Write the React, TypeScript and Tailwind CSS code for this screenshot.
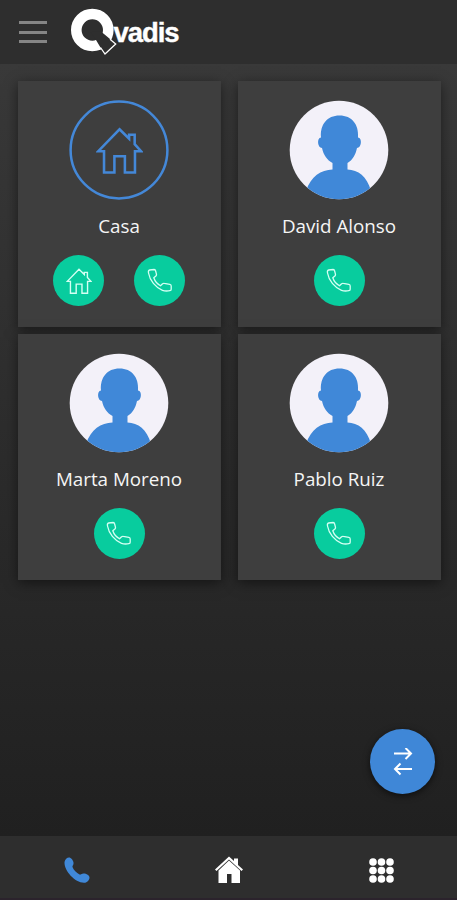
import React from 'react';

interface Contact {
  name: string;
  home?: boolean;
}

const contacts: Contact[] = [
  { name: 'Casa', home: true },
  { name: 'David Alonso' },
  { name: 'Marta Moreno' },
  { name: 'Pablo Ruiz' },
];

interface IconProps {
  className?: string;
  strokeWidth?: number;
}

function HouseOutline({ className, strokeWidth = 2 }: IconProps) {
  return (
    <svg viewBox="0 0 48 48" className={className} fill="none" stroke="currentColor" strokeWidth={strokeWidth}>
      <path d="M24 2.3 L33.8 12 V8 H39.5 V17.6 L46 24.7 H39.8 V46.5 H29.5 V29.8 H18.8 V46.5 H8.2 V24.7 H2.3 Z" />
    </svg>
  );
}

function PhoneOutline({ className }: IconProps) {
  return (
    <svg viewBox="0 0 26 26" className={className} fill="none" stroke="currentColor" strokeWidth="1.3" strokeLinejoin="round">
      <path d="M2.6 2 L7.2 1.5 Q8.3 1.5 8.5 2.5 L9.5 6.3 Q9.6 7.2 8.9 8 L6.8 9.8 C7.8 13 10.3 16 13.5 17.8 L15.6 15.7 Q16.4 15.2 17.3 15.4 L22.8 16.4 Q24.2 16.7 24.2 18 V21.2 Q24.2 22.5 22.9 22.7 C20 23.2 17.8 23.2 15.5 22.3 C8.5 19.6 2.8 12.500 1.5 5 Q1 2.300 2.6 2 Z" />
    </svg>
  );
}

function Avatar() {
  return (
    <svg viewBox="0 0 100 100" className="size-[100px]">
      <defs>
        <clipPath id="avatar">
          <circle cx="50" cy="50" r="49.3" />
        </clipPath>
      </defs>
      <circle cx="50" cy="50" r="49.3" fill="#f3f1f9" />
      <g clipPath="url(#avatar)" fill="#4088d8">
        <path d="M50.500 15.500 C63 15.500 70 24.500 69 37.500 C73.500 38 72.500 48 68 48 C66.500 55 63.500 60 58.500 63 V69.500 C69 70 78 76 82 91 V100 H17 V91 C22 76 32 70 43.500 69.500 V63 C38 60 34.500 55 33 48 C28.500 48 27.500 38 32 37.500 C31 24.500 38 15.500 50.500 15.500 Z" />
      </g>
    </svg>
  );
}

function Logo() {
  return (
    <svg viewBox="0 0 112 50" className="ml-[23px] h-[50px] w-[112px]">
      <circle cx="22.300" cy="23" r="16" fill="none" stroke="#fff" strokeWidth="10.600" />
      <path d="M20 24 L31 24.500 L46 37 L35 48 L26 33 Z" fill="#2e2e2e" />
      <path d="M40 32.300 L45.700 37 L35 47 L30.500 40.500" fill="none" stroke="#fff" strokeWidth="1.300" />
      <text x="43.500" y="35.300" fill="#fff" stroke="#fff" strokeWidth="0.400" fontSize="27.500" fontWeight="bold" fontFamily="'Liberation Sans', sans-serif" textLength="66" lengthAdjust="spacing">vadis</text>
    </svg>
  );
}

function RoundButton({ children }: { children: React.ReactNode }) {
  return (
    <button className="flex size-[51px] items-center justify-center rounded-full bg-[#08cc9e] text-[#d4fff3]">
      {children}
    </button>
  );
}

function ContactCard({ contact }: { contact: Contact }) {
  return (
    <div className="flex h-[246px] flex-col items-center bg-[#3e3e3e] pt-[19px] pr-px shadow-[0_3px_12px_rgba(0,0,0,0.5)]">
      {contact.home ? (
        <div className="grid size-[100px] place-items-center text-[#4488d8]">
          <svg viewBox="0 0 100 100" className="col-start-1 row-start-1 size-[100px]" fill="none" stroke="currentColor" strokeWidth="2.5">
            <circle cx="50" cy="50" r="48.4" />
          </svg>
          <HouseOutline className="col-start-1 row-start-1 size-[47px]" strokeWidth={2.6} />
        </div>
      ) : (
        <Avatar />
      )}
      <span className="mt-[13px] text-[18.8px] leading-[26px] whitespace-nowrap text-[#f5f5f5]">{contact.name}</span>
      <div className="mt-[16px] flex gap-[30px]">
        {contact.home && (
          <RoundButton>
            <HouseOutline className="size-[26px]" strokeWidth={2.6} />
          </RoundButton>
        )}
        <RoundButton>
          <PhoneOutline className="size-[26px]" />
        </RoundButton>
      </div>
    </div>
  );
}

export default function App() {
  return (
    <div className="relative flex h-[900px] w-[457px] flex-col overflow-hidden bg-[#2e2e2e] font-['Open_Sans','Noto_Sans',sans-serif]">
      <header className="flex h-[64px] shrink-0 items-center bg-[#2e2e2e] pl-[19px]">
        <button className="flex w-[28px] flex-col gap-[6.5px]">
          <span className="h-[3px] bg-[#858585]" />
          <span className="h-[3px] bg-[#858585]" />
          <span className="h-[3px] bg-[#858585]" />
        </button>
        <Logo />
      </header>

      <main className="flex-1 bg-linear-to-b from-[#393939] to-[#202020] pt-[17px] pl-[18px]">
        <div className="grid grid-cols-[203px_203px] gap-x-[17px] gap-y-[7px]">
          {contacts.map((c) => (
            <ContactCard key={c.name} contact={c} />
          ))}
        </div>
      </main>

      <button className="absolute top-[729px] left-[370px] flex size-[65px] items-center justify-center rounded-full bg-[#3f87d7] shadow-[0_2px_7px_rgba(0,0,0,0.6)]">
        <svg viewBox="0 0 20 28" className="h-[28px] w-[20px]" fill="none" stroke="#fff" strokeWidth="2">
          <path d="M1 5.500 H18 M12.500 0 L18 5.500 L12.500 11" />
          <path d="M19 21 H2 M7.500 15.500 L2 21 L7.500 26.500" />
        </svg>
      </button>

      <nav className="grid h-[64px] shrink-0 grid-cols-3 items-center justify-items-center border-b-2 border-[#2b232c] bg-[#2e2e2e] pt-[6px] pl-[2px]">
        <svg viewBox="0 0 28 28" className="mr-[2px] size-[28px]" fill="#4088d8">
          <path d="M1.500 6 C2 3.500 4 1.500 6 1.500 C8 1.500 10 4 10.500 6.500 C11 9 9 9.500 9.500 11 C10.500 14 13.500 17 16.500 18.500 C18 19 18.500 17.500 20.500 17.500 C23.500 17.500 26.500 19.500 26.500 21.500 C26.500 24 24 27 21 26.800 C12 26.500 1 15 1.500 6 Z" />
        </svg>
        <svg viewBox="0 0 28 28" className="size-[28px]" fill="#fff">
          <path d="M0 13.500 L14 0.500 L19 5 V2.500 H23 V9 L28 13.500 L26.500 15 L14 3.500 L1.500 15 Z" />
          <path d="M14 4.500 L25 14.500 V27 H16.500 V18 H12 V27 H3.500 V14.500 Z" />
        </svg>
        <svg viewBox="0 0 25 25" className="size-[25px]" fill="#fff">
          {[4, 12.5, 21].map((y) => [4, 12.5, 21].map((x) => <circle key={`${x}-${y}`} cx={x} cy={y} r="3.8" />))}
        </svg>
      </nav>
    </div>
  );
}
